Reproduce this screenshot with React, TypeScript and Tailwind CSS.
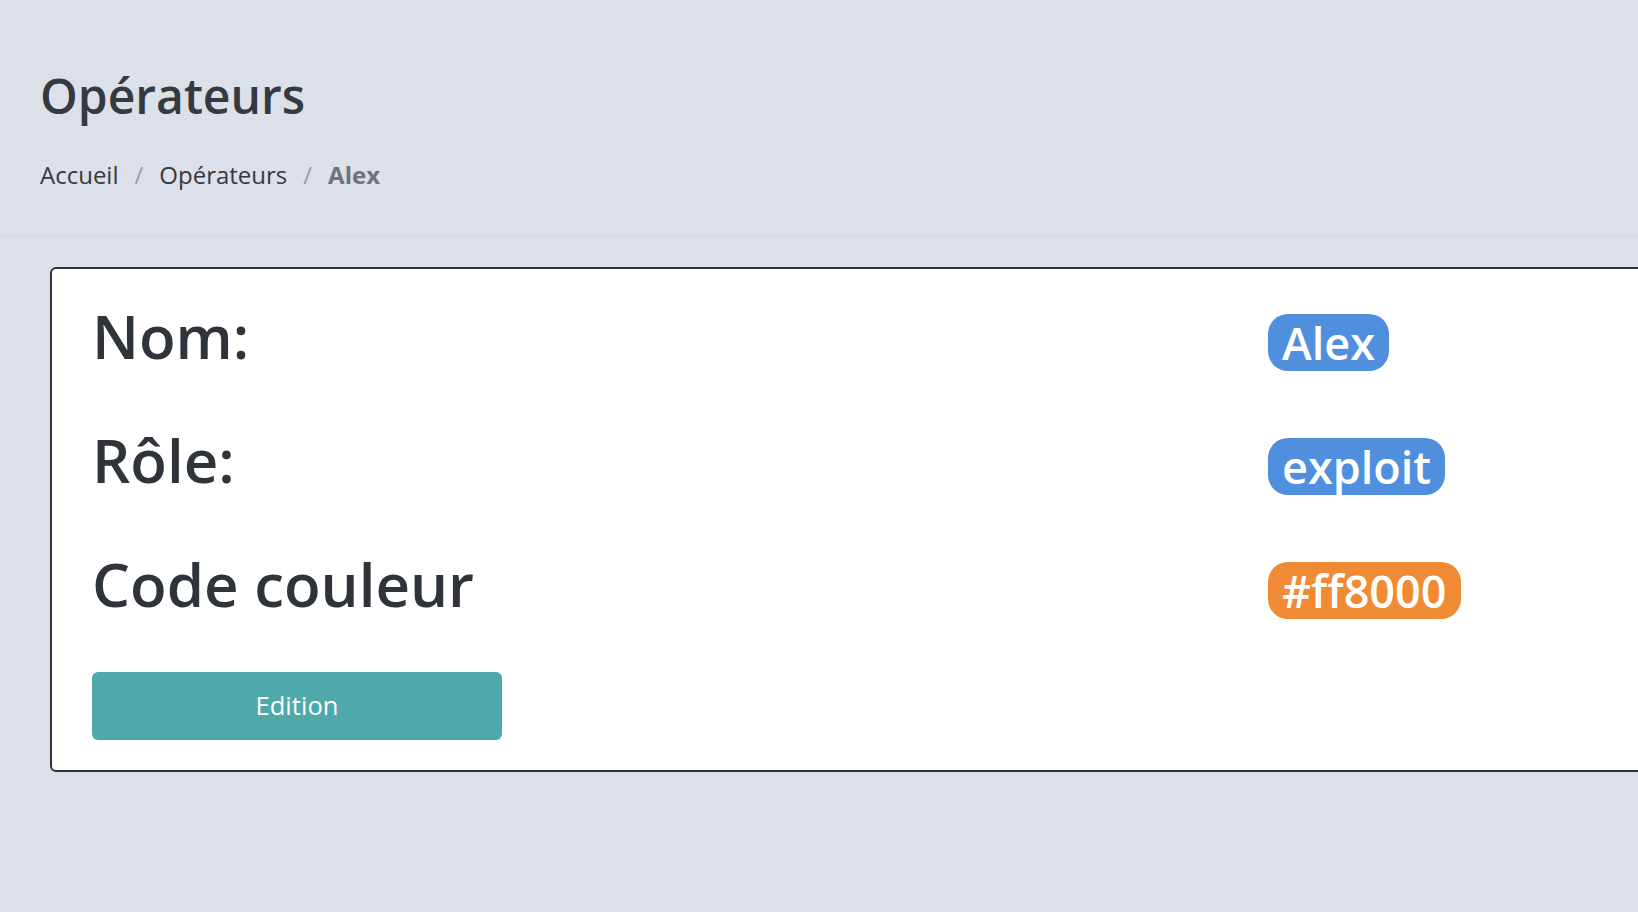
import React from "react";

const rows = [
  { label: "Nom:", value: "Alex", color: "bg-[#4f8fdd]" },
  { label: "Rôle:", value: "exploit", color: "bg-[#4f8fdd]" },
  { label: "Code couleur", value: "#ff8000", color: "bg-[#f08a35]" },
];

export default function App() {
  return (
    <div
      className="w-screen h-screen overflow-hidden bg-[#dce0e8] text-[#343a40]"
      style={{ fontFamily: '"Open Sans", "Noto Sans", sans-serif' }}
    >
      <header className="px-10 pt-[66px] pb-[43px] border-b border-[#d3d8e0]">
        <h1 className="text-[48px] leading-[60px] font-semibold text-[#343a40]">Opérateurs</h1>
        <nav className="mt-[31px] flex items-center text-[24px] leading-[36px]">
          <span className="text-[#343a40]">Accueil</span>
          <span className="px-[16px] text-[#9aa1a8]">/</span>
          <span className="text-[#343a40]">Opérateurs</span>
          <span className="px-[16px] text-[#9aa1a8]">/</span>
          <span className="font-bold text-[#6c737b]">Alex</span>
        </nav>
      </header>

      <main className="pt-[30px] pl-[50px]">
        <div className="w-[1700px] bg-white border-2 border-[#2f343a] rounded-[6px] pl-[40px] pt-[31px] pb-[30px]">
          {rows.map((r) => (
            <div key={r.label} className="flex items-start mb-[52px]">
              <div className="w-[1176px] text-[60px] leading-[72px] font-semibold text-[#2f343a]">
                {r.label}
              </div>
              <span
                className={`${r.color} mt-[14px] h-[57px] leading-[57px] px-[14px] rounded-[20px] text-[45px] font-semibold text-white`}
              >
                {r.value}
              </span>
            </div>
          ))}
          <button
            type="button"
            className="w-[410px] h-[68px] rounded-[6px] bg-[#4fa9ab] text-white text-[25.6px] font-medium"
          >
            Edition
          </button>
        </div>
      </main>
    </div>
  );
}
